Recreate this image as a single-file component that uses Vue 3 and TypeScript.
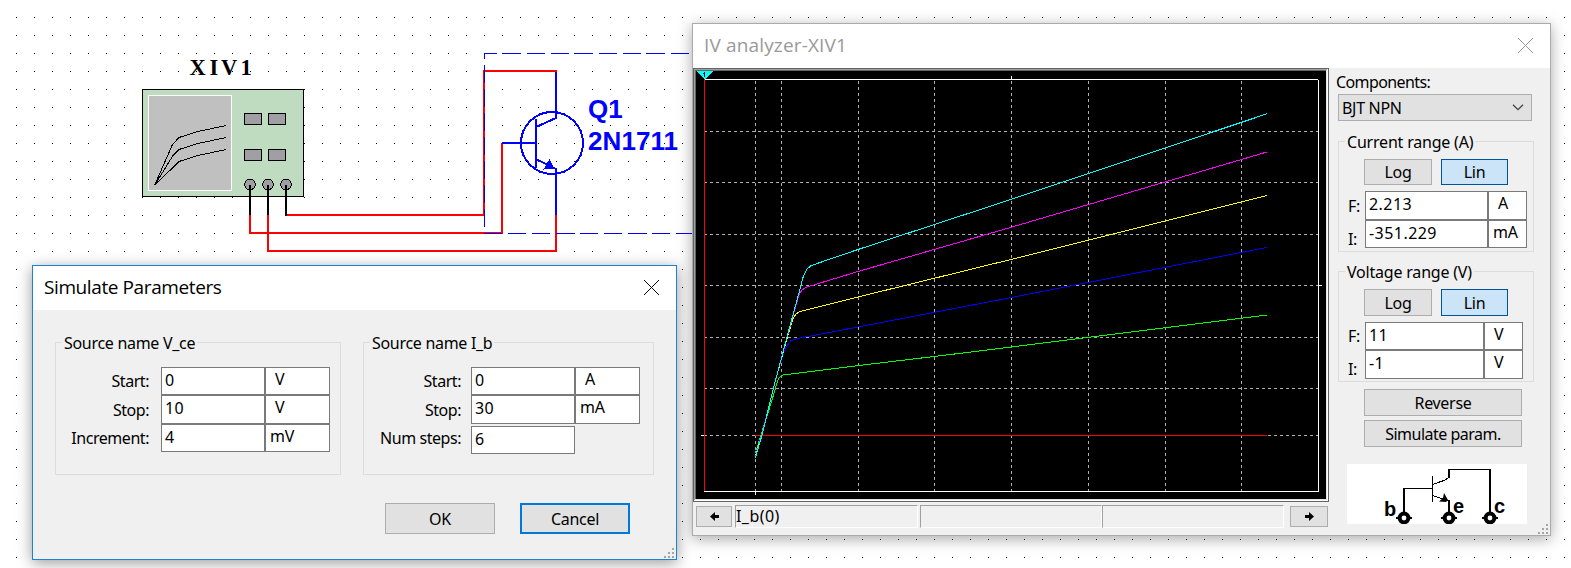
<script setup lang="ts">
interface Row {
  label: string
  value: string
  unit?: string
}
interface Group {
  title: string
  kind: string
  rows: Row[]
}

const sources: Group[] = [
  {
    title: 'Source name V_ce',
    kind: 'vce',
    rows: [
      { label: 'Start:', value: '0', unit: 'V' },
      { label: 'Stop:', value: '10', unit: 'V' },
      { label: 'Increment:', value: '4', unit: 'mV' },
    ],
  },
  {
    title: 'Source name I_b',
    kind: 'ib',
    rows: [
      { label: 'Start:', value: '0', unit: 'A' },
      { label: 'Stop:', value: '30', unit: 'mA' },
      { label: 'Num steps:', value: '6' },
    ],
  },
]

const ranges: Group[] = [
  {
    title: 'Current range (A)',
    kind: 'current',
    rows: [
      { label: 'F:', value: '2.213', unit: 'A' },
      { label: 'I:', value: '-351.229', unit: 'mA' },
    ],
  },
  {
    title: 'Voltage range (V)',
    kind: 'voltage',
    rows: [
      { label: 'F:', value: '11', unit: 'V' },
      { label: 'I:', value: '-1', unit: 'V' },
    ],
  },
]

const gridX: number[] = [755, 781, 858, 934, 1011, 1088, 1165, 1241]
const gridY: number[] = [131, 182, 234, 285, 337, 388, 435]

const traces: { color: string; points: string }[] = [
  { color: '#ff0000', points: '755,435.5 1267,435.5' },
  { color: '#00ff00', points: '755.5,453 760,438 768,413 775,390 777.5,381 779.5,377.5 782.7,375 858,365.6 935,356.4 1010,347.2 1267,315' },
  { color: '#0000ff', points: '755.5,455 762,434 774,386 780.5,362 784,352 787,346 790.7,340.8 796.7,338.7 858,327 1010,297.8 1267,247.4' },
  { color: '#ffff00', points: '755.5,456 762,434 774,386 786,342 789,332 793,319 796,314 800,311.5 858,297 1010,259.7 1267,195.4' },
  { color: '#ff00ff', points: '755.5,457 762,434 774,386 787,337.5 796,305 799,295 802,290 806,287.3 812,285.5 858,271.5 1010,227.6 1267,152' },
  { color: '#00ffff', points: '755.5,457.7 762,435 774,386 787,337 800,289 803,277.5 806.7,269.5 810.7,265.7 858,249.5 1010,199.8 1267,113.8' },
]

const knobs: number[] = [250, 268, 286]
const keys: number[][] = [[244, 113], [268, 113], [244, 149], [268, 149]]
const pins: number[] = [57, 102, 143]
</script>

<template>
  <main class="desktop">
    <svg class="schematic" width="1571" height="568" viewBox="0 0 1571 568">
      <defs>
        <pattern id="dots" x="16" y="17" width="18" height="18" patternUnits="userSpaceOnUse">
          <rect width="1" height="1" fill="#000" />
        </pattern>
      </defs>
      <rect y="10" x="10" width="1561" height="558" fill="url(#dots)" />

      <text class="mono" x="189.5 209.5 221 240.5" y="74.5">XIV1</text>
      <g shape-rendering="crispEdges">
        <rect x="142.5" y="89.5" width="161" height="107" fill="#c0dcc0" stroke="#000" />
        <rect x="148.5" y="95.5" width="83" height="95" fill="#c0c0c0" stroke="#fff" />
        <g fill="none" stroke="#000">
          <polyline points="154.5,185.5 172.5,144.5 179,137.5 198,131.5 226,125.5" />
          <polyline points="154.5,185.5 173,155.5 179,149.5 198,143.5 226,137.5" />
          <polyline points="154.5,185.5 179,161.5 198,155.5 226,149.5" />
        </g>
        <rect v-for="k in keys" :key="k.join()" :x="k[0] + 0.5" :y="k[1] + 0.5" width="17" height="11" fill="#a0a0a4" stroke="#000" />
        <circle v-for="x in knobs" :key="x" :cx="x" cy="184.5" r="5.3" fill="#a0a0a4" stroke="#000" />
        <g fill="none" stroke="#f00" stroke-width="2">
          <path d="M286 215H484V71H557" />
          <path d="M250 215V233H502V143" />
          <path d="M268 215V251H556V215" />
        </g>
        <path d="M250 185V215M268 185V215M286 185V216" stroke="#000" stroke-width="2" />
        <g fill="none" stroke="#00f">
          <path d="M484 53.5H689" stroke-dasharray="18 6" stroke-dashoffset="5" />
          <path d="M484.5 53V228" stroke-dasharray="18 6" stroke-dashoffset="12" />
          <path d="M484 233.5H692" stroke-dasharray="18 6" />
          <path d="M556 72V118L536 127M536 119V168M502 143H536M536 159L556 169V215" stroke-width="2" />
          <circle cx="552" cy="143" r="31" stroke-width="2" />
        </g>
        <polygon points="549.5,159 554,168.5 543.5,169.5" fill="#00f" />
      </g>
      <text class="part" x="588" y="118">Q1</text>
      <text class="part" x="588" y="150" textLength="90">2N1711</text>
    </svg>

    <section class="window analyzer">
      <header class="titlebar">
        <span class="caption analyzer-caption">IV analyzer-XIV1</span>
        <svg class="close" width="15" height="15" viewBox="0 0 15 15"><path d="M0 0L15 15M15 0L0 15" stroke="#999" /></svg>
      </header>
      <div class="analyzer-body">
        <div class="scope">
          <svg class="plot" width="636" height="434" viewBox="693 68 636 434" shape-rendering="crispEdges">
            <rect x="693" y="68" width="636" height="434" fill="#646464" />
            <rect x="694" y="69" width="634" height="432" fill="#fff" />
            <path d="M694 69H1327V70H695V500H694Z" fill="#a0a0a0" />
            <rect x="695" y="70" width="632" height="430" fill="#e3e3e3" />
            <path d="M695 70H1326V71H696V499H695Z" fill="#646464" />
            <rect x="696" y="71" width="630" height="428" fill="#000" />
            <g stroke="#b0b0b0" stroke-dasharray="3 3">
              <path v-for="x in gridX" :key="x" :d="`M${x + 0.5} 81V491`" />
              <path v-for="y in gridY" :key="y" :d="`M704 ${y + 0.5}H1318`" />
            </g>
            <path d="M704 79.5H1318M1318.5 80V492M704 491.5H1319M1011.5 76V79M1318 285.5H1322M701 435.5H704M755.5 491V495" stroke="#fff" fill="none" />
            <path d="M704.5 79V491" stroke="#f00" />
            <polyline v-for="t in traces" :key="t.color" :points="t.points" :stroke="t.color" fill="none" />
            <polygon points="696,71 713,71 705,79 704,79" fill="#0ff" />
            <path d="M704.5 72V77M703 73.5H705" stroke="#000" />
          </svg>
          <footer class="statusbar">
            <button class="nudge"><svg width="9" height="9" viewBox="0 0 9 9"><path d="M0 4.5L5 0V3H9V6H5V9Z" /></svg></button>
            <span class="cell first">I_b(0)</span>
            <span class="cell"></span>
            <span class="cell"></span>
            <button class="nudge right"><svg width="9" height="9" viewBox="0 0 9 9"><path d="M9 4.5L4 0V3H0V6H4V9Z" /></svg></button>
          </footer>
        </div>
        <aside class="side">
          <div class="comp-label">Components:</div>
          <div class="select">
            <span>BJT NPN</span>
            <svg width="12" height="7" viewBox="0 0 12 7"><path d="M1 .8L6 5.6L11 .8" fill="none" stroke="#444" stroke-width="1.3" /></svg>
          </div>
          <fieldset v-for="g in ranges" :key="g.kind" class="group range" :class="g.kind">
            <legend>{{ g.title }}</legend>
            <div class="modes">
              <button>Log</button>
              <button class="active">Lin</button>
            </div>
            <div class="fields">
              <template v-for="r in g.rows" :key="r.label">
                <label>{{ r.label }}</label>
                <span class="value">{{ r.value }}</span>
                <span class="unit" :class="{ wide: r.unit!.length > 1 }">{{ r.unit }}</span>
              </template>
            </div>
          </fieldset>
          <button class="action">Reverse</button>
          <button class="action simulate">Simulate param.</button>
          <svg class="pinout" width="180" height="60" viewBox="0 0 180 60">
            <g fill="none" stroke="#000" shape-rendering="crispEdges">
              <path d="M57 48V24M102 14V5M143 5V48M102 36V48" stroke-width="2" />
              <path d="M56 24.5H85M85.5 12V38M101 5.5H144M86 20.5L91 18.5L97 16.5L102 13.5M86 31.5L97 35.5L102 36.5" />
            </g>
            <polygon points="97,29 101,36 99,38 92,37.5 96,34" />
            <circle v-for="x in pins" :key="x" :cx="x" cy="54" r="4.4" fill="#fff" stroke="#000" stroke-width="4" />
            <path v-for="x in pins" :key="'h' + x" :d="`M${x - 8} 54H${x - 3}M${x + 3} 54H${x + 8}`" stroke="#000" stroke-width="2" />
            <text x="37" y="52">b</text>
            <text x="106" y="49">e</text>
            <text x="147" y="49">c</text>
          </svg>
        </aside>
      </div>
      <svg class="grip" width="11" height="11" viewBox="0 0 11 11"><path d="M8 0h2v2h-2zM4 4h2v2h-2zM8 4h2v2h-2zM0 8h2v2h-2zM4 8h2v2h-2zM8 8h2v2h-2z" /></svg>
    </section>

    <section class="window params">
      <header class="titlebar">
        <span class="caption">Simulate Parameters</span>
        <svg class="close" width="15" height="15" viewBox="0 0 15 15"><path d="M0 0L15 15M15 0L0 15" stroke="#000" /></svg>
      </header>
      <div class="groups">
        <fieldset v-for="g in sources" :key="g.kind" class="group source" :class="g.kind">
          <legend>{{ g.title }}</legend>
          <div class="fields">
            <template v-for="r in g.rows" :key="r.label">
              <label>{{ r.label }}</label>
              <span class="value" :class="{ lone: !r.unit }">{{ r.value }}</span>
              <span v-if="r.unit" class="unit" :class="{ wide: r.unit.length > 1 }">{{ r.unit }}</span>
            </template>
          </div>
        </fieldset>
      </div>
      <div class="buttons">
        <button>OK</button>
        <button class="focused">Cancel</button>
      </div>
      <svg class="grip" width="11" height="11" viewBox="0 0 11 11"><path d="M8 0h2v2h-2zM4 4h2v2h-2zM8 4h2v2h-2zM0 8h2v2h-2zM4 8h2v2h-2zM8 8h2v2h-2z" /></svg>
    </section>
  </main>
</template>

<style>
body {
  margin: 0;
  overflow: hidden;
}
</style>

<style scoped>
* {
  box-sizing: border-box;
}
.desktop {
  position: relative;
  width: 1571px;
  height: 568px;
  overflow: hidden;
  background: #fff;
  color: #000;
  font: 16px/22px "Noto Sans", "Open Sans", sans-serif;
  letter-spacing: -0.3px;
}
.schematic,
.plot,
.pinout {
  display: block;
}
.mono {
  font: bold 22.5px "Liberation Serif", serif;
  letter-spacing: 0;
}
.part {
  font: bold 26px "Liberation Sans", sans-serif;
  letter-spacing: 0;
  fill: #00f;
}
.window {
  position: absolute;
  background: #f0f0f0;
  border: 1px solid #aaa;
}
.analyzer {
  left: 692px;
  top: 23px;
  width: 859px;
  height: 513px;
  box-shadow: 0 3px 14px rgba(0, 0, 0, 0.34);
}
.params {
  left: 32px;
  top: 265px;
  width: 645px;
  height: 295px;
  border-color: #1883d7;
  box-shadow: 0 3px 14px rgba(0, 0, 0, 0.4);
}
.titlebar {
  display: flex;
  justify-content: space-between;
  height: 44px;
  padding: 14px 17px 0 11px;
  background: #fff;
}
.caption {
  font: 19px/26px "Open Sans", "Noto Sans", sans-serif;
  letter-spacing: -0.4px;
  margin-top: -6px;
}
.analyzer-caption {
  letter-spacing: 0.15px;
  color: #999;
}
.analyzer-body {
  display: grid;
  grid-template-columns: 636px 1fr;
}
.statusbar {
  display: flex;
  height: 33px;
  padding: 3px 1px 0 3px;
}
button {
  display: block;
  padding: 0;
  background: #e1e1e1;
  border: 1px solid #adadad;
  color: inherit;
  font: inherit;
  letter-spacing: inherit;
  text-align: center;
}
.nudge {
  display: flex;
  align-items: center;
  justify-content: center;
  width: 36px;
  height: 21px;
  margin: 1px 3px 0 0;
}
.nudge.right {
  width: 38px;
  margin: 1px 0 0 6px;
}
.cell {
  width: 182px;
  height: 23px;
  border: 1px solid #fff;
  border-top-color: #a0a0a0;
  border-left-color: #a0a0a0;
  line-height: 21px;
  letter-spacing: 0.45px;
}
.cell.first {
  width: 183px;
  margin-right: 2px;
}
.side {
  padding: 3px 0 0 9px;
}
.comp-label {
  margin-left: -2px;
  letter-spacing: -0.6px;
}
.select {
  display: flex;
  align-items: center;
  justify-content: space-between;
  width: 194px;
  height: 27px;
  margin-top: 1px;
  padding: 0 7px 0 3px;
  background: #e1e1e1;
  border: 1px solid #adadad;
}
.group {
  min-width: 0;
  margin: 0;
  padding: 0;
  border: 1px solid #dcdcdc;
}
.group legend {
  height: 22px;
  margin-left: 6px;
  padding: 0 2px;
  line-height: 24px;
}
.range legend {
  letter-spacing: -0.2px;
}
.fields {
  display: grid;
}
.fields label {
  align-self: center;
}
.value,
.unit {
  background: #fff;
  border: 1px solid #7a7a7a;
  padding-left: 3px;
  line-height: 25px;
}
.value {
  letter-spacing: 0.3px;
}
.unit {
  padding-left: 9px;
  line-height: 23px;
}
.unit.wide {
  padding-left: 4px;
}
.range {
  width: 196px;
  height: 122px;
  margin-top: 9px;
}
.voltage {
  margin-top: 8px;
}
.modes {
  display: flex;
  gap: 9px;
  margin: 7px 0 6px 25px;
}
.modes button {
  width: 68px;
  height: 26px;
}
.voltage .modes button {
  height: 27px;
}
.modes .active {
  width: 67px;
  background: #cce4f7;
  border-color: #005499;
}
.range .fields {
  grid-template: 29px 28px / 17px 123px 39px;
  margin-left: 9px;
}
.voltage .fields {
  grid-template: 28px 29px / 17px 119px 39px;
}
.range .value {
  letter-spacing: 0.45px;
}
.range .fields label:nth-of-type(2) {
  padding-top: 9px;
  line-height: 20px;
}
.action {
  width: 158px;
  height: 27px;
  margin: 7px 0 0 26px;
}
.simulate {
  margin-top: 4px;
  letter-spacing: -0.5px;
}
.pinout {
  margin: 17px 0 0 9px;
  background: #fff;
}
.pinout text {
  font: bold 20px "Liberation Sans", sans-serif;
}
.groups {
  display: flex;
  gap: 22px;
  padding: 21px 0 0 22px;
}
.source {
  width: 286px;
  height: 144px;
}
.source.ib {
  width: 291px;
}
.source .fields {
  grid-template: 28px 29px 28px / 105px 104px 65px;
  margin-top: 14px;
}
.source .fields label {
  text-align: right;
  letter-spacing: -0.45px;
}
.source.ib .fields {
  grid-template-columns: 107px 104px 65px;
}
.source.vce label {
  padding-right: 12px;
}
.source.ib label {
  padding-right: 10px;
}
.value.lone {
  position: relative;
  top: 2px;
}
.buttons {
  display: flex;
  gap: 25px;
  margin: 28px 0 0 352px;
}
.buttons button {
  width: 110px;
  height: 31px;
}
.buttons .focused {
  border: 2px solid #0078d7;
}
.grip {
  position: absolute;
  right: 1px;
  bottom: 0;
  fill: #a5a5a5;
}
</style>
